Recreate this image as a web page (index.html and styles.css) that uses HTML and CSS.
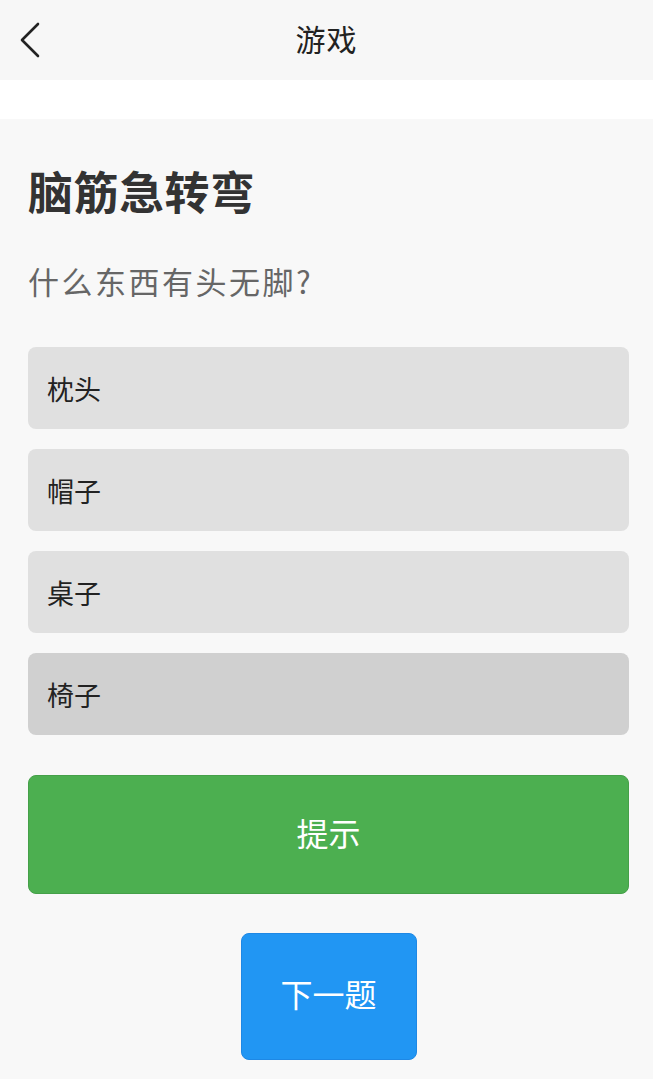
FILE: index.html
```html
<!DOCTYPE html>
<html lang="zh-CN">
<head>
    <meta charset="UTF-8">
    <meta name="viewport" content="width=device-width, initial-scale=1.0">
    <title>游戏</title>
    <link rel="stylesheet" href="styles.css">
</head>
<body>
    <header class="top-bar">
        <button class="back-btn" aria-label="返回">
            <svg width="24" height="40" viewBox="0 0 24 40">
                <polyline points="18,5 2,21 18,37" fill="none" stroke="#222" stroke-width="2.6" stroke-linecap="round" stroke-linejoin="round"/>
            </svg>
        </button>
        <div class="top-title">游戏</div>
    </header>
    <div class="spacer"></div>
    <main class="game">
        <h1 class="game-title">脑筋急转弯</h1>
        <p class="question">什么东西有头无脚?</p>
        <div class="options">
            <div class="option">枕头</div>
            <div class="option">帽子</div>
            <div class="option">桌子</div>
            <div class="option active">椅子</div>
        </div>
        <button class="hint-btn">提示</button>
        <div class="next-row">
            <button class="next-btn">下一题</button>
        </div>
    </main>
</body>
</html>
```

FILE: styles.css
```css
body {
    font-family: "Noto Sans CJK SC", "Noto Sans", sans-serif;
    margin: 0;
    padding: 0;
    background-color: #f8f8f8;
    width: 653px;
    min-height: 1079px;
}
button {
    font-family: inherit;
    cursor: pointer;
}
.top-bar {
    height: 80px;
    background-color: #f7f7f7;
    display: flex;
    align-items: center;
    justify-content: center;
    position: relative;
}
.back-btn {
    position: absolute;
    left: 20px;
    top: 19px;
    padding: 0;
    border: none;
    background: none;
    display: flex;
}
.top-title {
    font-size: 30px;
    line-height: 40px;
    color: #222;
    margin-top: -4px;
    letter-spacing: 1px;
}
.spacer {
    height: 39px;
    background-color: #fff;
}
.game {
    padding: 48px 24px 20px 28px;
}
.game-title {
    margin: 0;
    font-size: 45px;
    line-height: 48px;
    font-weight: bold;
    color: #333;
    letter-spacing: 0.5px;
}
.question {
    margin: 46px 0 0;
    font-size: 31px;
    line-height: 40px;
    letter-spacing: 2.5px;
    color: #666;
}
.options {
    margin-top: 46px;
    display: flex;
    flex-direction: column;
    gap: 20px;
}
.option {
    height: 82px;
    box-sizing: border-box;
    padding-left: 19px;
    display: flex;
    align-items: center;
    background-color: #e0e0e0;
    border-radius: 8px;
    font-size: 27px;
    color: #222;
}
.option.active {
    background-color: #d0d0d0;
}
.hint-btn {
    display: block;
    width: 100%;
    height: 119px;
    margin-top: 40px;
    background-color: #4caf50;
    border: 1px solid #45a049;
    border-radius: 8px;
    color: #fff;
    font-size: 32px;
    padding: 0 0 6px;
}
.next-row {
    margin-top: 39px;
    display: flex;
    justify-content: center;
}
.next-btn {
    width: 176px;
    height: 127px;
    background-color: #2196f3;
    border: 1px solid #1e88e5;
    border-radius: 8px;
    color: #fff;
    font-size: 32px;
    padding: 0 0 8px;
}
```
